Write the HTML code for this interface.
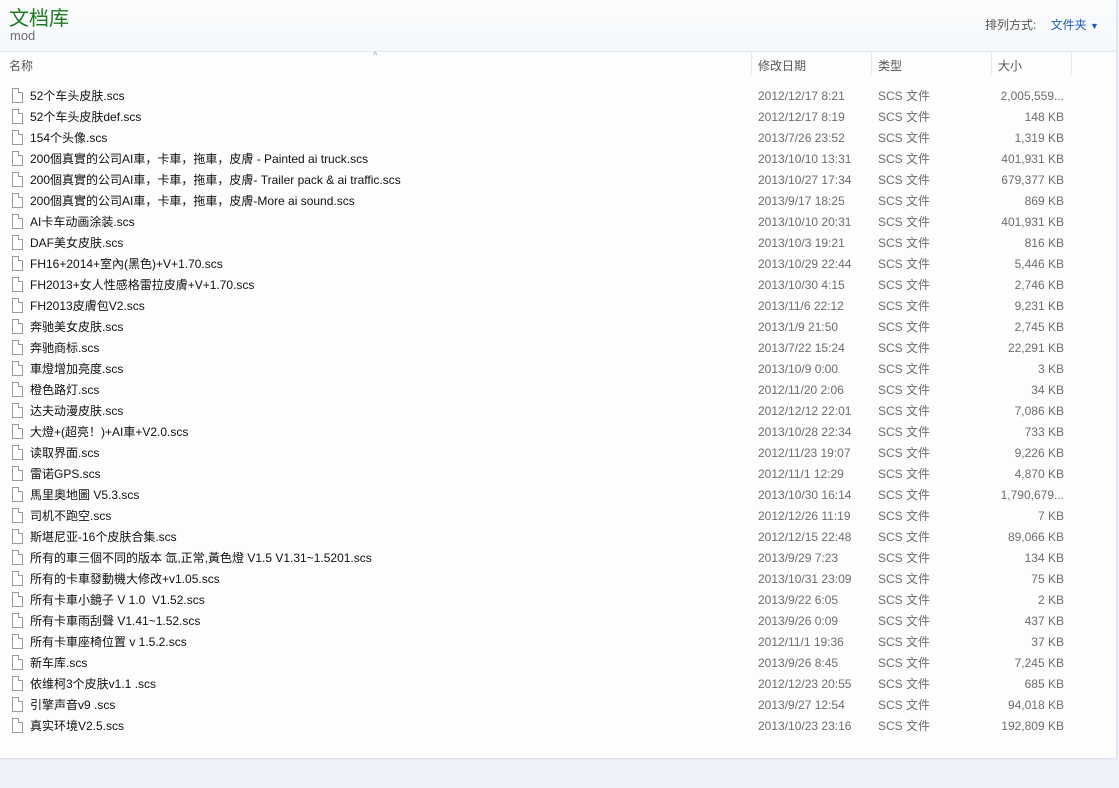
<!DOCTYPE html>
<html><head><meta charset="utf-8"><style>
body{margin:0;width:1119px;height:788px;overflow:hidden;background:#eef2fa;font-family:"Liberation Sans","Microsoft YaHei","Noto Sans CJK SC",sans-serif;font-size:12px;color:#1e1e1e;position:relative}
#main{position:absolute;left:0;top:0;width:1116px;height:758px;background:#fdfdfd;border-right:1px solid #e0e4ea;box-shadow:0 1px 2px #d6dbe4}
#top{position:absolute;left:0;top:0;width:1116px;height:51px;background:linear-gradient(180deg,#fbfcfd,#f5f8fb);border-bottom:1px solid #e3e8ee}
.title{position:absolute;left:9px;top:2px;font-size:20px;color:#1e7a22}
.sub{position:absolute;left:10px;top:28px;font-size:13px;color:#6d6d6d}
.sort{position:absolute;left:985px;top:16px;color:#555;font-size:12px}
.sort b{font-weight:normal;color:#1e5fb4;margin-left:11px}
.hdr{position:absolute;top:53px;height:26px;line-height:26px;color:#555;font-size:12px}
.sep{position:absolute;top:52px;width:1px;height:22px;background:#e6eaee}
.row{position:absolute;left:0;height:21px;line-height:21px;width:1116px;font-size:12px}
.row span{position:absolute;white-space:nowrap}
.n{left:30px;color:#111}
.d{left:758px;color:#6d6d6d}
.t{left:878px;color:#6d6d6d}
.s{right:52px;color:#6d6d6d}
.ic{position:absolute;left:12px;top:2px;width:11px;height:15px;border:1px solid #9a9a9a;background:#fff;box-sizing:border-box}
.ic:after{content:"";position:absolute;right:-1px;top:-1px;width:4px;height:4px;background:#fdfdfd;border-left:1px solid #9a9a9a;border-bottom:1px solid #9a9a9a}
</style></head><body>
<div id="main">
<div id="top"><div class="title">文档库</div><div class="sub">mod</div>
<div class="sort">排列方式: <b>文件夹 <span style="font-size:9px">▼</span></b></div></div>
<div style="position:absolute;left:373px;top:50px;font-size:9px;color:#8aa">^</div>
<div class="hdr" style="left:9px">名称</div>
<div class="hdr" style="left:758px">修改日期</div>
<div class="hdr" style="left:878px">类型</div>
<div class="hdr" style="left:998px">大小</div>
<div class="sep" style="left:751px"></div><div class="sep" style="left:871px"></div><div class="sep" style="left:991px"></div><div class="sep" style="left:1071px"></div>
<div id="rows"></div>
</div>
<script>
var r=[
["52个车头皮肤.scs","2012/12/17 8:21","2,005,559..."],
["52个车头皮肤def.scs","2012/12/17 8:19","148 KB"],
["154个头像.scs","2013/7/26 23:52","1,319 KB"],
["200個真實的公司AI車，卡車，拖車，皮膚 - Painted ai truck.scs","2013/10/10 13:31","401,931 KB"],
["200個真實的公司AI車，卡車，拖車，皮膚- Trailer pack &amp; ai traffic.scs","2013/10/27 17:34","679,377 KB"],
["200個真實的公司AI車，卡車，拖車，皮膚-More ai sound.scs","2013/9/17 18:25","869 KB"],
["AI卡车动画涂装.scs","2013/10/10 20:31","401,931 KB"],
["DAF美女皮肤.scs","2013/10/3 19:21","816 KB"],
["FH16+2014+室內(黑色)+V+1.70.scs","2013/10/29 22:44","5,446 KB"],
["FH2013+女人性感格雷拉皮膚+V+1.70.scs","2013/10/30 4:15","2,746 KB"],
["FH2013皮膚包V2.scs","2013/11/6 22:12","9,231 KB"],
["奔驰美女皮肤.scs","2013/1/9 21:50","2,745 KB"],
["奔驰商标.scs","2013/7/22 15:24","22,291 KB"],
["車燈增加亮度.scs","2013/10/9 0:00","3 KB"],
["橙色路灯.scs","2012/11/20 2:06","34 KB"],
["达夫动漫皮肤.scs","2012/12/12 22:01","7,086 KB"],
["大燈+(超亮！)+AI車+V2.0.scs","2013/10/28 22:34","733 KB"],
["读取界面.scs","2012/11/23 19:07","9,226 KB"],
["雷诺GPS.scs","2012/11/1 12:29","4,870 KB"],
["馬里奧地圖 V5.3.scs","2013/10/30 16:14","1,790,679..."],
["司机不跑空.scs","2012/12/26 11:19","7 KB"],
["斯堪尼亚-16个皮肤合集.scs","2012/12/15 22:48","89,066 KB"],
["所有的車三個不同的版本 氙,正常,黃色燈 V1.5 V1.31~1.5201.scs","2013/9/29 7:23","134 KB"],
["所有的卡車發動機大修改+v1.05.scs","2013/10/31 23:09","75 KB"],
["所有卡車小鏡子 V 1.0&nbsp; V1.52.scs","2013/9/22 6:05","2 KB"],
["所有卡車雨刮聲 V1.41~1.52.scs","2013/9/26 0:09","437 KB"],
["所有卡車座椅位置 v 1.5.2.scs","2012/11/1 19:36","37 KB"],
["新车库.scs","2013/9/26 8:45","7,245 KB"],
["依维柯3个皮肤v1.1 .scs","2012/12/23 20:55","685 KB"],
["引擎声音v9 .scs","2013/9/27 12:54","94,018 KB"],
["真实环境V2.5.scs","2013/10/23 23:16","192,809 KB"]];
var h="";r.forEach(function(x,i){h+='<div class="row" style="top:'+(86+i*21)+'px"><div class="ic"></div><span class="n">'+x[0]+'</span><span class="d">'+x[1]+'</span><span class="t">SCS 文件</span><span class="s">'+x[2]+'</span></div>';});
document.getElementById("rows").innerHTML=h;
</script>
</body></html>
